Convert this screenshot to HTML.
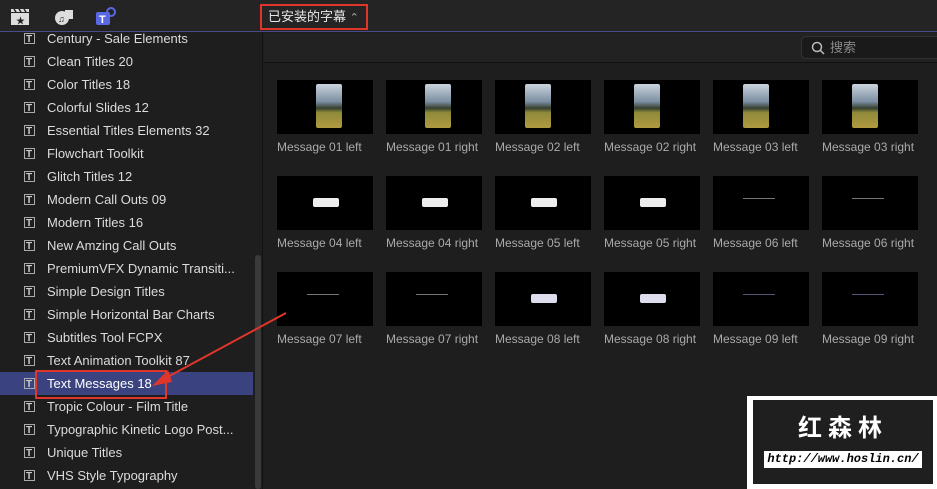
<!DOCTYPE html>
<html><head><meta charset="utf-8"><style>
*{margin:0;padding:0;box-sizing:border-box}
body{width:937px;height:489px;background:#1e1e1e;font-family:"Liberation Sans","Noto Sans CJK SC",sans-serif;overflow:hidden;position:relative;color:#ddd}
.top{position:absolute;left:0;top:0;width:937px;height:32px;background:#242424;border-bottom:1px solid #4a4a8a}
.side{position:absolute;left:0;top:33px;width:263px;height:456px;background:#1e1e1e;border-right:1px solid #111}
.scroll{position:absolute;left:255px;top:255px;width:6px;height:234px;background:#3a3a3a;border-radius:3px}
.item{position:absolute;left:0;width:253px;height:23px;font-size:13px;line-height:24px;padding-left:47px;color:#dcdcdc}
.item .ic{position:absolute;left:24px;top:6px;width:11px;height:11px;border:1px solid #aaa}
.item .ic:after{content:"T";position:absolute;left:1px;top:-6px;font-size:10px;color:#ccc;font-weight:bold}
.sel{background:#3b4280;color:#fff}
.rtop{position:absolute;left:264px;top:33px;width:673px;height:30px;border-bottom:1px solid #111;background:#222}
.search{position:absolute;left:801px;top:36px;width:140px;height:23px;background:#1a1a1a;border:1px solid #333;border-radius:5px;font-size:13px;color:#888;line-height:21px;padding-left:28px}
.th{position:absolute;width:96px;height:54px;background:#000}
.lb{position:absolute;font-size:12px;color:#aaa;white-space:nowrap}
.ph{position:absolute;left:30px;top:4px;width:26px;height:44px;border-radius:2px;background:linear-gradient(#c9d4dc 0,#7d8fa3 40%,#35402f 55%,#8f8a3a 65%,#b09a40 100%)}
.bub{position:absolute;left:36px;top:22px;width:26px;height:9px;background:#eee;border-radius:2px}
.bubd{position:absolute;left:30px;top:22px;width:32px;height:5px;border-top:1px solid #777}
</style></head><body>
<div class="top">
 <svg style="position:absolute;left:10px;top:8px" width="20" height="18"><rect x="1" y="5" width="18" height="12" fill="#ddd"/><path d="M1 1h18v3H1z" fill="#ddd"/><path d="M4 1l2 3M9 1l2 3M14 1l2 3" stroke="#222" stroke-width="1.5"/><text x="6" y="16" font-size="9" fill="#222">★</text></svg>
 <svg style="position:absolute;left:54px;top:8px" width="20" height="18"><circle cx="8" cy="10" r="7" fill="#ddd"/><rect x="11" y="2" width="8" height="9" fill="#ddd"/><text x="4" y="14" font-size="9" fill="#222">♫</text></svg>
 <svg style="position:absolute;left:95px;top:6px" width="22" height="20"><rect x="1" y="6" width="14" height="13" rx="2" fill="#5968e0"/><text x="4" y="17" font-size="11" font-weight="bold" fill="#fff">T</text><circle cx="16" cy="6" r="4" fill="none" stroke="#5968e0" stroke-width="2"/></svg>
 <div style="position:absolute;left:260px;top:4px;width:108px;height:26px;border:2px solid #e0352a;font-size:13px;line-height:22px;padding-left:6px;color:#e6e6e6">已安装的字幕 <span style="color:#aaa;font-size:11px">⌃</span></div>
</div>
<div class="side">
 <div class="item" style="top:-6px"><span class="ic"></span>Century - Sale Elements</div>
 <div class="item" style="top:17px"><span class="ic"></span>Clean Titles 20</div>
 <div class="item" style="top:40px"><span class="ic"></span>Color Titles 18</div>
 <div class="item" style="top:63px"><span class="ic"></span>Colorful Slides 12</div>
 <div class="item" style="top:86px"><span class="ic"></span>Essential Titles Elements 32</div>
 <div class="item" style="top:109px"><span class="ic"></span>Flowchart Toolkit</div>
 <div class="item" style="top:132px"><span class="ic"></span>Glitch Titles 12</div>
 <div class="item" style="top:155px"><span class="ic"></span>Modern Call Outs 09</div>
 <div class="item" style="top:178px"><span class="ic"></span>Modern Titles 16</div>
 <div class="item" style="top:201px"><span class="ic"></span>New Amzing Call Outs</div>
 <div class="item" style="top:224px"><span class="ic"></span>PremiumVFX Dynamic Transiti...</div>
 <div class="item" style="top:247px"><span class="ic"></span>Simple Design Titles</div>
 <div class="item" style="top:270px"><span class="ic"></span>Simple Horizontal Bar Charts</div>
 <div class="item" style="top:293px"><span class="ic"></span>Subtitles Tool FCPX</div>
 <div class="item" style="top:316px"><span class="ic"></span>Text Animation Toolkit 87</div>
 <div class="item sel" style="top:339px"><span class="ic"></span>Text Messages 18</div>
 <div class="item" style="top:362px"><span class="ic"></span>Tropic Colour - Film Title</div>
 <div class="item" style="top:385px"><span class="ic"></span>Typographic Kinetic Logo Post...</div>
 <div class="item" style="top:408px"><span class="ic"></span>Unique Titles</div>
 <div class="item" style="top:431px"><span class="ic"></span>VHS Style Typography</div>
</div>
<div class="scroll"></div>
<div style="position:absolute;left:35px;top:370px;width:132px;height:29px;border:2px solid #e0352a"></div>
<div class="rtop"></div>
<div class="search"><svg style="position:absolute;left:9px;top:4px" width="14" height="14"><circle cx="6" cy="6" r="4.5" stroke="#bbb" stroke-width="1.5" fill="none"/><path d="M9.5 9.5L13 13" stroke="#bbb" stroke-width="1.5"/></svg>搜索</div>

<div class="th" style="left:277px;top:80px"><div class="ph" style="left:39px"></div></div><div class="lb" style="left:277px;top:140px">Message 01 left</div>
<div class="th" style="left:386px;top:80px"><div class="ph" style="left:39px"></div></div><div class="lb" style="left:386px;top:140px">Message 01 right</div>
<div class="th" style="left:495px;top:80px"><div class="ph" style="left:30px"></div></div><div class="lb" style="left:495px;top:140px">Message 02 left</div>
<div class="th" style="left:604px;top:80px"><div class="ph" style="left:30px"></div></div><div class="lb" style="left:604px;top:140px">Message 02 right</div>
<div class="th" style="left:713px;top:80px"><div class="ph" style="left:30px"></div></div><div class="lb" style="left:713px;top:140px">Message 03 left</div>
<div class="th" style="left:822px;top:80px"><div class="ph" style="left:30px"></div></div><div class="lb" style="left:822px;top:140px">Message 03 right</div>

<div class="th" style="left:277px;top:176px"><div class="bub"></div></div><div class="lb" style="left:277px;top:236px">Message 04 left</div>
<div class="th" style="left:386px;top:176px"><div class="bub"></div></div><div class="lb" style="left:386px;top:236px">Message 04 right</div>
<div class="th" style="left:495px;top:176px"><div class="bub"></div></div><div class="lb" style="left:495px;top:236px">Message 05 left</div>
<div class="th" style="left:604px;top:176px"><div class="bub"></div></div><div class="lb" style="left:604px;top:236px">Message 05 right</div>
<div class="th" style="left:713px;top:176px"><div class="bubd"></div></div><div class="lb" style="left:713px;top:236px">Message 06 left</div>
<div class="th" style="left:822px;top:176px"><div class="bubd"></div></div><div class="lb" style="left:822px;top:236px">Message 06 right</div>

<div class="th" style="left:277px;top:272px"><div class="bubd"></div></div><div class="lb" style="left:277px;top:332px">Message 07 left</div>
<div class="th" style="left:386px;top:272px"><div class="bubd"></div></div><div class="lb" style="left:386px;top:332px">Message 07 right</div>
<div class="th" style="left:495px;top:272px"><div class="bub" style="background:#dde"></div></div><div class="lb" style="left:495px;top:332px">Message 08 left</div>
<div class="th" style="left:604px;top:272px"><div class="bub" style="background:#dde"></div></div><div class="lb" style="left:604px;top:332px">Message 08 right</div>
<div class="th" style="left:713px;top:272px"><div class="bubd" style="border-color:#557"></div></div><div class="lb" style="left:713px;top:332px">Message 09 left</div>
<div class="th" style="left:822px;top:272px"><div class="bubd" style="border-color:#557"></div></div><div class="lb" style="left:822px;top:332px">Message 09 right</div>

<svg style="position:absolute;left:0;top:0" width="937" height="489"><path d="M286 313L162 380" stroke="#e0352a" stroke-width="2"/><path d="M152 386L168 370L172 382Z" fill="#e0352a"/></svg>

<div style="position:absolute;left:747px;top:396px;width:190px;height:93px;background:#fff"></div>
<div style="position:absolute;left:753px;top:400px;width:180px;height:84px;background:#1f1f1f"></div>
<div style="position:absolute;left:753px;top:408px;width:180px;text-align:center;font-size:24px;font-weight:bold;color:#fff;letter-spacing:6px;font-family:'Noto Sans CJK SC',sans-serif">红森林</div>
<div style="position:absolute;left:764px;top:451px;width:158px;height:17px;background:#fff;color:#000;font-family:'Liberation Mono',monospace;font-style:italic;font-weight:bold;font-size:12px;line-height:17px;text-align:center">http://www.hoslin.cn/</div>
</body></html>
